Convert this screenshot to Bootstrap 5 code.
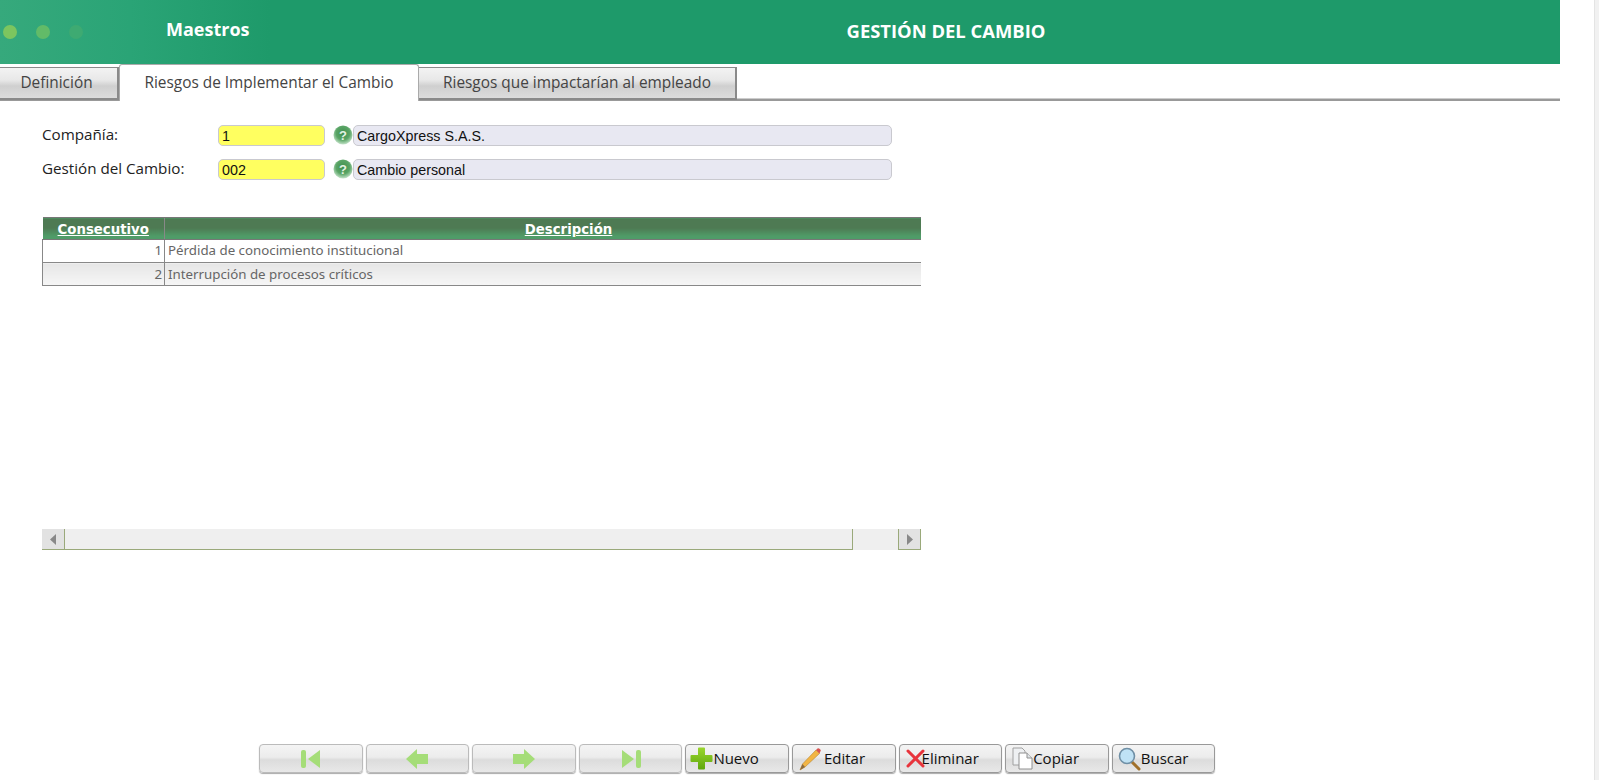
<!DOCTYPE html>
<html lang="es"><head><meta charset="utf-8"><title>Gestión del Cambio</title>
<link href="https://cdn.jsdelivr.net/npm/bootstrap@5.3.0/dist/css/bootstrap.min.css" rel="stylesheet">
<style>
html,body{height:780px;overflow:hidden;background:#fff}
body{font-family:"Open Sans","Noto Sans",sans-serif;color:#222}
.shell{width:1560px;height:780px}
.edge{position:fixed;top:0;right:0;width:5px;height:780px;background:#f1f1f1;border-left:1px solid #e4e4e4}
.topbar{height:64px;background:linear-gradient(90deg,#36a97c 0,#2aa476 130px,#1e9a6a 270px,#1e9a6a 100%);color:#fff;font-weight:700}
.dots{width:166px;padding-left:3px;gap:19px}
.dot{width:14px;height:14px;border-radius:50%;background:#7cc55f}
.dot.d2{background:#62bb68}.dot.d3{background:#3eaa72}
.brand{width:500px;font-size:18px;margin-top:-6px}
.pagetitle{width:560px;font-size:18.4px;text-align:center;margin-top:-2px}
.tabrow{height:37px;border-bottom:2px solid #999;box-shadow:0 -1px 0 #ccc inset;align-items:flex-end}
.tabx{height:33px;margin-bottom:-1px;border:1px solid #8a8a8a;border-width:1px 2px 2px 1px;font-size:15.4px;color:#444;background:linear-gradient(#f3f3f3 0,#e8e8e8 40%,#cfcfcf 60%,#dcdcdc 100%);text-align:center;line-height:29px}
.tabx.t1{width:119px;border-left:0;padding-right:4px}
.tabx.t2{width:300px;height:37px;margin-bottom:-2px;background:#fff;border:1px solid #aaa;border-bottom:0;border-radius:3px 3px 0 0;line-height:35px;position:relative}
.tabx.t3{width:319px;margin-left:-1px}
.formarea{padding:24px 0 0 42px}
.frow{height:21px;margin-bottom:13px;align-items:center}
.lbl{width:176px;font-size:15.2px;color:#222;margin-top:-3px}
.fld{height:21px;border:1px solid #c9c9cf;border-radius:5px;font:14.3px "Liberation Sans",sans-serif;color:#111;padding:1px 3px 0;line-height:18px}
.fkey{width:107px;background:#ffff60}
.fname{width:539px;background:#e8e8f2}
.qmark{width:20px;margin:-2px 0 0 8px}
.gridbox{width:879px;margin-top:37px;overflow:hidden}
.gridtable{width:930px;border-collapse:collapse;table-layout:fixed;font-family:"Noto Sans",sans-serif;font-size:13.3px;color:#666}
.gridtable th{height:22px;padding:1px 0 0;text-align:center;color:#fff;font:700 13.300px "DejaVu Sans",sans-serif;text-decoration:underline;background:linear-gradient(#4e7a53 0,#4e7a53 45%,#4f9c68 85%,#4f9c68 100%);border-top:1px solid #777;border-bottom:1px solid #777}
.gridtable th+th{border-left:1px solid #888}
.gridtable td{height:23px;padding:0 2px 0 3px;border-top:1px solid #888;border-bottom:1px solid #888;white-space:nowrap}
.gridtable td:first-child{text-align:right;padding-right:2px;border-left:1px solid #888;border-right:1px solid #888}
.gridtable tr.alt td{background:linear-gradient(#e6e6e6,#f6f6f6);padding-top:2px}
.hscroll{height:21px;margin-top:243px;background:#efefef}
.sbtn{width:23px;background:#e2e2e2;border-bottom:1px solid #9aa97a;align-items:center;justify-content:center}
.sbtn.sl{border-right:1px solid #9aa97a}
.sbtn.sr{border-left:1px solid #9aa97a;border-right:1px solid #9aa97a;margin-left:auto}
.sthumb{width:788px;background:#efefef;border-bottom:1px solid #9aa97a;border-right:1px solid #9aa97a}
.toolbar{position:relative;margin-top:194px;padding-left:259px;gap:3px}
.tbtn{width:103.6px;height:29px;padding:0;border:1px solid #bbb;border-radius:4px;background:linear-gradient(#f4f4f4 0,#ececec 45%,#dcdcdc 55%,#e8e8e8 100%);font-size:15px;color:#111;display:flex;align-items:center;justify-content:center;box-shadow:0 1px 1px #aaa}
.tbtn.on{border-color:#999;justify-content:flex-start}
.tbtn svg{flex:none}
.tbtn.pa{padding-left:4px}.tbtn.pb{padding-left:5px}.tbtn.pc{padding-left:6px}
.ovl{margin-right:-3px}.sp{margin-right:2px}
</style></head><body>
<div class="shell">
<div class="topbar d-flex align-items-center">
  <div class="dots d-flex align-items-center"><span class="dot"></span><span class="dot d2"></span><span class="dot d3"></span></div>
  <div class="brand">Maestros</div>
  <div class="pagetitle">GESTIÓN DEL CAMBIO</div>
</div>
<div class="tabrow d-flex">
  <div class="tabx t1">Definición</div>
  <div class="tabx t2">Riesgos de Implementar el Cambio</div>
  <div class="tabx t3">Riesgos que impactarían al empleado</div>
</div>
<div class="formarea">
  <div class="frow d-flex">
    <div class="lbl">Compañía:</div><div class="fld fkey">1</div>
    <svg class="qmark" height="20" viewBox="0 0 20 20"><defs><radialGradient id="qg" cx=".5" cy=".4" r=".6"><stop offset="0" stop-color="#3f8f4d"/><stop offset=".6" stop-color="#5aa566"/><stop offset="1" stop-color="#c5e3ca"/></radialGradient></defs><circle cx="10" cy="10" r="9.5" fill="url(#qg)"/><text x="10" y="14.5" font-size="13" font-weight="700" text-anchor="middle" fill="#e3f2e3" font-family="Liberation Sans">?</text></svg>
    <div class="fld fname">CargoXpress S.A.S.</div>
  </div>
  <div class="frow d-flex">
    <div class="lbl">Gestión del Cambio:</div><div class="fld fkey">002</div>
    <svg class="qmark" height="20" viewBox="0 0 20 20"><circle cx="10" cy="10" r="9.5" fill="url(#qg)"/><text x="10" y="14.5" font-size="13" font-weight="700" text-anchor="middle" fill="#e3f2e3" font-family="Liberation Sans">?</text></svg>
    <div class="fld fname">Cambio personal</div>
  </div>
  <div class="gridbox">
    <table class="gridtable">
      <colgroup><col style="width:122px"><col></colgroup>
      <thead><tr><th>Consecutivo</th><th>Descripción</th></tr></thead>
      <tbody>
        <tr><td>1</td><td>Pérdida de conocimiento institucional</td></tr>
        <tr class="alt"><td>2</td><td>Interrupción de procesos críticos</td></tr>
      </tbody>
    </table>
    <div class="hscroll d-flex">
      <div class="sbtn sl d-flex"><svg width="6" height="11" viewBox="0 0 6 11"><path d="M6 0L0 5.5 6 11z" fill="#888"/></svg></div>
      <div class="sthumb"></div>
      <div class="sbtn sr d-flex"><svg width="6" height="11" viewBox="0 0 6 11"><path d="M0 0L6 5.5 0 11z" fill="#888"/></svg></div>
    </div>
  </div>
</div>
<div class="toolbar d-flex">
  <button class="tbtn" type="button" aria-label="Primero"><svg width="22" height="22" viewBox="0 0 22 22"><rect x="1" y="2" width="5" height="18" rx="2" fill="#a5dd78"/><path d="M8 11L20 2V20z" fill="#a5dd78"/></svg></button>
  <button class="tbtn" type="button" aria-label="Anterior"><svg width="24" height="22" viewBox="0 0 24 22"><path d="M1 11L12 1V6H23V16H12V21z" fill="#a5dd78"/></svg></button>
  <button class="tbtn" type="button" aria-label="Siguiente"><svg width="24" height="22" viewBox="0 0 24 22"><path d="M23 11L12 1V6H1V16H12V21z" fill="#a5dd78"/></svg></button>
  <button class="tbtn" type="button" aria-label="Último"><svg width="22" height="22" viewBox="0 0 22 22"><rect x="16" y="2" width="5" height="18" rx="2" fill="#a5dd78"/><path d="M14 11L2 2V20z" fill="#a5dd78"/></svg></button>
  <button class="tbtn on pa" type="button"><svg width="23" height="23" viewBox="0 0 23 23"><defs><linearGradient id="pg" x1="0" y1="0" x2="0" y2="1"><stop offset="0" stop-color="#9ad62e"/><stop offset="1" stop-color="#5fa70c"/></linearGradient></defs><path d="M8 1.500Q8 .5 9 .5h5q1 0 1 1V8h6.500q1 0 1 1v5q0 1-1 1H15v6.500q0 1-1 1H9q-1 0-1-1V15H1.500q-1 0-1-1V9q0-1 1-1H8z" fill="url(#pg)"/></svg>Nuevo</button>
  <button class="tbtn on pb" type="button"><svg class="sp" width="24" height="24" viewBox="0 0 24 24"><path d="M2 23l2.500-6L18 3l3.500 3.500L7 20z" fill="#f2b544" stroke="#b88430" stroke-width=".6"/><path d="M18 3l1.500-1.500q1-.7 2 .3l1 1q.8 1-.3 2L21.500 6.500z" fill="#d9534f"/><path d="M2 23l2.500-6L7 20z" fill="#8a6a40"/></svg>Editar</button>
  <button class="tbtn on pc" type="button"><svg class="ovl" width="19" height="19" viewBox="0 0 19 19"><path d="M2 2L17 17M17 2L2 17" stroke="#e8343c" stroke-width="3" stroke-linecap="round"/></svg>Eliminar</button>
  <button class="tbtn on pc" type="button"><svg width="21" height="23" viewBox="0 0 21 23"><path d="M1 1h9l3 3v14H1z" fill="#eef0f2" stroke="#a0a0a0"/><path d="M7 6h8l5 5v11H7z" fill="#fff" stroke="#909090"/><path d="M15 6v5h5" fill="#dfe3e6" stroke="#909090"/></svg>Copiar</button>
  <button class="tbtn on pb" type="button"><svg width="23" height="24" viewBox="0 0 23 24"><path d="M14 15l7 7" stroke="#a0702a" stroke-width="3" stroke-linecap="round"/><circle cx="9" cy="9" r="7.500" fill="#bfe2f5" stroke="#6f8fa5" stroke-width="1.6"/></svg>Buscar</button>
</div>
</div>
<div class="edge"></div>
</body></html>
